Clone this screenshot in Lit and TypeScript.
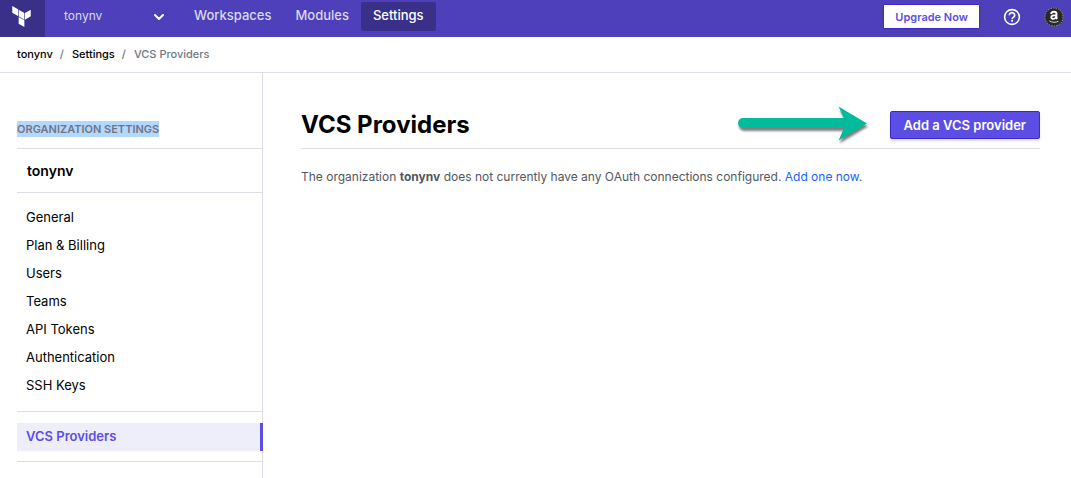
import { LitElement, html, css, svg } from "lit";
import { customElement, property } from "lit/decorators.js";

const logo = svg`<svg width="21" height="21" viewBox="0 0 24 24" fill="#fff" aria-hidden="true">
  <path d="M1.44 0v7.575l6.561 3.79V3.787zm21.12 4.227l-6.561 3.791v7.574l6.56-3.787zM8.72 4.23v7.575l6.561 3.787V8.018zm0 8.405v7.575L15.28 24v-7.578z"/>
</svg>`;

const chevron = svg`<svg class="chevron" width="10" height="6" viewBox="0 0 10 6" fill="none" stroke="#fff" stroke-width="2" stroke-linecap="round" stroke-linejoin="round" aria-hidden="true">
  <path d="M1 1l4 4 4-4"/>
</svg>`;

const help = svg`<svg width="18" height="18" viewBox="0 0 18 18" fill="none" stroke="#fff" aria-hidden="true">
  <circle cx="9" cy="9" r="7.4" stroke-width="1.6"/>
  <path d="M6.3 7.2a2.7 2.5 0 1 1 4.3 2c-.9.7-1.5 1-1.5 2" stroke-width="1.6"/>
  <path d="M9.1 12.1v1.7" stroke-width="1.7"/>
</svg>`;

const avatar = svg`<svg width="20" height="20" viewBox="0 0 20 20" fill="none" aria-hidden="true">
  <circle cx="10" cy="10" r="9.7" fill="#29292b"/>
  <circle cx="10" cy="10" r="9.1" stroke="#a9a9ad" stroke-width="1" stroke-dasharray="1.5 1.1"/>
  <path d="M7.1 6.9c.4-1.5 1.4-2.1 2.8-2.1 1.7 0 2.6.8 2.6 2.3v3.3c0 .7.2 1.1.6 1.6M12.3 8.1c-3.3-.1-5 .5-5 2.2 0 2.3 4.1 2.1 4.900-.5" stroke="#fff" stroke-width="1.9"/>
  <path d="M5.3 13.9c3 1.8 6.400 1.8 9.200.3" stroke="#d6d6d8" stroke-width="1"/>
</svg>`;

const arrow = svg`<svg class="arrow" width="140" height="44" viewBox="0 0 140 44" aria-hidden="true">
  <path fill="#00bc9c" d="M8 15H109L103.500 3.500L132 20.500L103.500 37.500L109 25H8A5 5 0 0 1 8 15Z"/>
</svg>`;

@customElement("top-bar")
class TopBar extends LitElement {
  static styles = css`
    :host { display: block; background: #4d40ba; color: #dbd9f1; }
    .bar { display: flex; height: 37px; }
    .home { display: flex; width: 45px; align-items: center; justify-content: center; background: #3a3089; padding: 0 2px 4px 0; box-sizing: border-box; }
    .org { display: flex; align-items: center; width: 101px; padding: 0 17px 5px 19px; position: relative; }
    select { appearance: none; width: 100%; border: 0; padding: 0; margin: 0; background: none; color: inherit; font: inherit; font-size: 12px; line-height: 20px; }
    .chevron { position: absolute; right: 18px; top: 14px; pointer-events: none; }
    nav { display: flex; padding: 2px 0 6px; }
    .tab { padding: 0 12px 2px; line-height: 27px; color: inherit; font-weight: 500; text-decoration: none; border-radius: 2px; }
    .tab.on { background: #3a3089; color: #fff; }
    .right { display: flex; margin-left: auto; align-items: center; padding-right: 7px; padding-bottom: 4px; }
    .upgrade { height: 25px; padding: 0 11px; border: 1px solid #4126d9; border-radius: 1px; background: #fff; color: #5c4ee5; font: 600 11px/16px Inter, sans-serif; box-shadow: 0 2px 2px #4b4691; }
    .icon { display: flex; padding: 0; border: 0; background: none; }
    .help { margin: 0 23px; }
  `;
  render() {
    return html`<div class="bar">
      <a class="home" href="#" aria-label="Home">${logo}</a>
      <label class="org"><select aria-label="Organization"><option>tonynv</option></select>${chevron}</label>
      <nav>
        <a class="tab" href="#">Workspaces</a>
        <a class="tab" href="#">Modules</a>
        <a class="tab on" href="#" aria-current="page">Settings</a>
      </nav>
      <div class="right">
        <button class="upgrade">Upgrade Now</button>
        <button class="icon help" aria-label="Help">${help}</button>
        <button class="icon" aria-label="Account">${avatar}</button>
      </div>
    </div>`;
  }
}

@customElement("settings-nav")
class SettingsNav extends LitElement {
  @property() org = "";
  static styles = css`
    :host { display: block; box-sizing: border-box; width: 263px; padding: 48px 0 0 17px; border-right: 1px solid #dcdee7; color: #000; }
    h2 { margin: 0; padding-bottom: 11px; font-size: 11px; line-height: 16px; font-weight: 600; color: #6f7682; }
    mark { display: inline-block; background: #b3d7ff; color: inherit; }
    .name { padding: 0 10px; border: solid #dcdee7; border-width: 1px 0; font-size: 14px; line-height: 43px; font-weight: 600; }
    ul { list-style: none; margin: 0; padding: 11px 0; border-bottom: 1px solid #dcdee7; }
    ul.last { padding-bottom: 10px; margin-right: -1px; border: 0; }
    .rule { height: 1px; background: #dcdee7; }
    a { display: block; padding: 0 9px 2px; line-height: 26px; color: inherit; text-decoration: none; }
    a.on { background: #eeedfa; border-right: 3px solid #5c4ee5; color: #5c4ee5; font-weight: 600; }
  `;
  render() {
    const items = ["General", "Plan & Billing", "Users", "Teams", "API Tokens", "Authentication", "SSH Keys"];
    return html`<h2><mark>ORGANIZATION SETTINGS</mark></h2>
      <div class="name">${this.org}</div>
      <ul>${items.map((t) => html`<li><a href="#">${t}</a></li>`)}</ul>
      <ul class="last"><li><a class="on" href="#" aria-current="page">VCS Providers</a></li></ul>
      <div class="rule"></div>`;
  }
}

@customElement("app-root")
class AppRoot extends LitElement {
  static styles = css`
    :host { display: flex; flex-direction: column; min-height: 100vh; background: #fff; font: 13px/20px Inter, sans-serif; color: #525761; }
    .crumbs { display: flex; gap: 7px; padding: 0 17px; border-bottom: 1px solid #dcdee7; font-size: 11px; line-height: 35px; font-weight: 500; color: #6f7682; }
    .crumbs a { color: #000; text-decoration: none; }
    .crumbs .sep { padding-right: 1px; }
    .body { display: flex; flex: 1; }
    main { flex: 1; padding: 34px 31px 0 38px; }
    .head { display: flex; align-items: center; justify-content: space-between; height: 35px; padding-bottom: 6px; border-bottom: 1px solid #dcdee7; }
    h1 { margin: 0; font-size: 24px; line-height: 36px; font-weight: 700; color: #000; }
    .actions { display: flex; align-items: center; gap: 15px; }
    .arrow { display: block; filter: drop-shadow(1px 3px 1px #00000080); }
    .add { height: 28px; padding: 0 13px; border: 1px solid #3d2bc9; border-radius: 2px; background: #5c4ee5; color: #fff; font: 600 13px/20px Inter, sans-serif; box-shadow: 0 2px 2px #dcdee7; }
    p { margin: 18px 0 0; font-size: 12px; }
    p a { color: #1563ff; text-decoration: none; }
    strong { font-weight: 700; }
  `;
  render() {
    return html`<top-bar></top-bar>
      <div class="crumbs">
        <a href="#">tonynv</a><span class="sep">/</span><a href="#">Settings</a><span class="sep">/</span><span>VCS Providers</span>
      </div>
      <div class="body">
        <settings-nav org="tonynv"></settings-nav>
        <main>
          <div class="head">
            <h1>VCS Providers</h1>
            <div class="actions">${arrow}<button class="add">Add a VCS provider</button></div>
          </div>
          <p>The organization <strong>tonynv</strong> does not currently have any OAuth connections configured. <a href="#">Add one now</a>.</p>
        </main>
      </div>`;
  }
}
